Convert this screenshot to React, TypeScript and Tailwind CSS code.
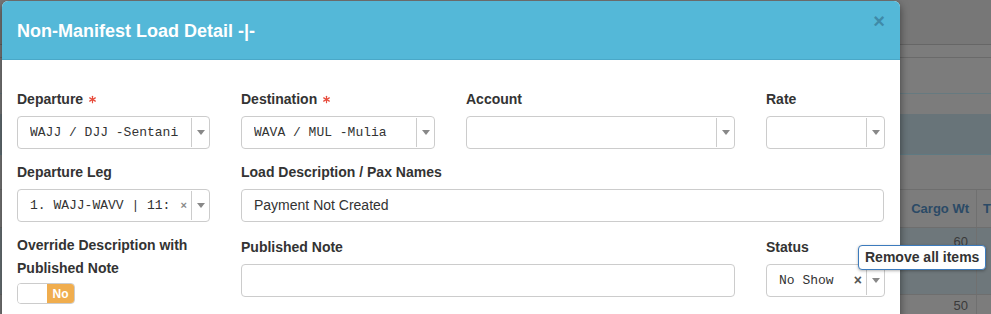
import React from 'react';
import { Asterisk } from 'lucide-react';

const mono = { fontFamily: '"Liberation Mono", "DejaVu Sans Mono", monospace' };

function Caret() {
  return (
    <div className="w-[18px] flex items-center justify-center border-l border-[#cccccc] my-[1px]">
      <span className="block w-0 h-0 border-l-[4px] border-r-[4px] border-t-[5px] border-l-transparent border-r-transparent border-t-[#888888]" />
    </div>
  );
}

function Select({ value, clear, small }: { value?: string; clear?: boolean; small?: boolean }) {
  return (
    <div className="h-[33px] flex border border-[#cccccc] rounded-[4px] bg-white">
      <div className="relative flex-1 min-w-0 flex items-center pl-[12px] pr-[4px] text-[13px] text-[#333] whitespace-nowrap overflow-hidden" style={mono}>
        <span className="flex-1 overflow-hidden">{value}</span>
        {clear && (
          <span className={`ml-[2px] ${small ? 'text-[11px] text-[#888]' : 'text-[14px] text-[#555]'} font-bold`} style={{ fontFamily: '"Liberation Sans", sans-serif' }}>
            ×
          </span>
        )}
      </div>
      <Caret />
    </div>
  );
}

function Label({ children, req }: { children: React.ReactNode; req?: boolean }) {
  return (
    <div className="flex items-center text-[14px] font-bold text-[#333] leading-[23px] mb-[5px]">
      {children}
      {req && <Asterisk size={13} strokeWidth={2.2} className="text-[#e74c3c] ml-[3px]" />}
    </div>
  );
}

export default function App() {
  return (
    <div className="relative w-[991px] h-[314px] overflow-hidden bg-[#7c7c7c]" style={{ fontFamily: '"Liberation Sans", Arial, sans-serif' }}>
      {/* dimmed page behind */}
      <div className="flex flex-col">
        <div className="h-[45px] bg-[#777777] border-b border-[#666666]" />
        <div className="h-[13px] border-b border-[#6a6a6a]" />
        <div className="h-[36px] border-b border-[#667a80]" />
        <div className="h-[20px]" />
        <div className="h-[41px] bg-[#687479] border-b border-[#5f7a82]" />
        <div className="h-[34px]" />
        <div className="border-t border-[#6e6e6e] flex">
          <div className="w-[901px]" />
          <div className="w-[76px] h-[37px] flex items-center justify-end pr-[7px] border-r border-[#707070] text-[13px] font-bold text-[#2b4a66]">Cargo Wt</div>
          <div className="pl-[6px] h-[37px] flex items-center text-[13px] font-bold text-[#2b4a66]">T</div>
        </div>
        <div className="h-[67px] bg-[#6e777b] border-t border-[#6e6e6e] flex">
          <div className="w-[901px]" />
          <div className="w-[76px] pr-[8px] pt-[4px] text-right text-[13px] text-[#3a3a3a] border-r border-[#707070]">60</div>
        </div>
        <div className="h-[20px] border-t border-[#6e6e6e] flex">
          <div className="w-[901px]" />
          <div className="w-[76px] pr-[8px] pt-[1px] text-right text-[13px] text-[#3a3a3a] border-r border-[#707070]">50</div>
        </div>
      </div>

      {/* modal */}
      <div className="absolute left-[2px] top-[1px] w-[898px] h-[340px] bg-white rounded-[6px] overflow-hidden shadow-[0_3px_9px_rgba(0,0,0,0.5)]">
        <div className="h-[59px] bg-[#54b8d8] border-b border-[#4aa8c8] flex items-start justify-between pl-[15px] pr-[15px]">
          <h4 className="text-[18px] font-bold text-white mt-[18px] leading-[24px]">Non-Manifest Load Detail -|-</h4>
          <span className="text-[#3f8aa8] text-[20px] font-bold leading-none mt-[10px]">×</span>
        </div>
        <div className="px-[15px] pt-[28px]">
          <div className="grid grid-cols-[193px_194px_269px_119px] gap-x-[31px]">
            <div>
              <Label req>Departure</Label>
              <Select value="WAJJ / DJJ -Sentani" />
            </div>
            <div>
              <Label req>Destination</Label>
              <Select value="WAVA / MUL -Mulia" />
            </div>
            <div>
              <Label>Account</Label>
              <Select />
            </div>
            <div>
              <Label>Rate</Label>
              <Select />
            </div>
          </div>
          <div className="grid grid-cols-[193px_643px] gap-x-[31px] mt-[12px]">
            <div>
              <Label>Departure Leg</Label>
              <Select value="1. WAJJ-WAVV | 11:" clear small />
            </div>
            <div>
              <Label>Load Description / Pax Names</Label>
              <div className="h-[33px] border border-[#cccccc] rounded-[4px] flex items-center px-[12px] text-[14px] text-[#333]">Payment Not Created</div>
            </div>
          </div>
          <div className="grid grid-cols-[193px_494px_119px] gap-x-[31px] mt-[12px]">
            <div>
              <div className="text-[14px] font-bold text-[#333] leading-[23px] mb-[3px]">Override Description with Published Note</div>
              <div className="w-[58px] h-[21px] flex border border-[#cccccc] rounded-[4px] overflow-hidden">
                <div className="w-[29px] bg-white" />
                <div className="flex-1 bg-[#f0ad4e] text-white text-[12px] font-bold flex items-center justify-center">No</div>
              </div>
            </div>
            <div className="pt-[2px]">
              <Label>Published Note</Label>
              <div className="h-[33px] border border-[#cccccc] rounded-[4px]" />
            </div>
            <div className="pt-[2px]">
              <Label>Status</Label>
              <Select value="No Show" clear />
            </div>
          </div>
        </div>
      </div>

      {/* tooltip */}
      <div className="absolute left-[858px] top-[245px] h-[25px] px-[6px] flex items-center bg-white border border-[#3c7bbd] rounded-[4px] text-[14px] font-bold text-[#333] whitespace-nowrap shadow-[0_1px_3px_rgba(0,0,0,0.3)]">
        Remove all items
      </div>
    </div>
  );
}
